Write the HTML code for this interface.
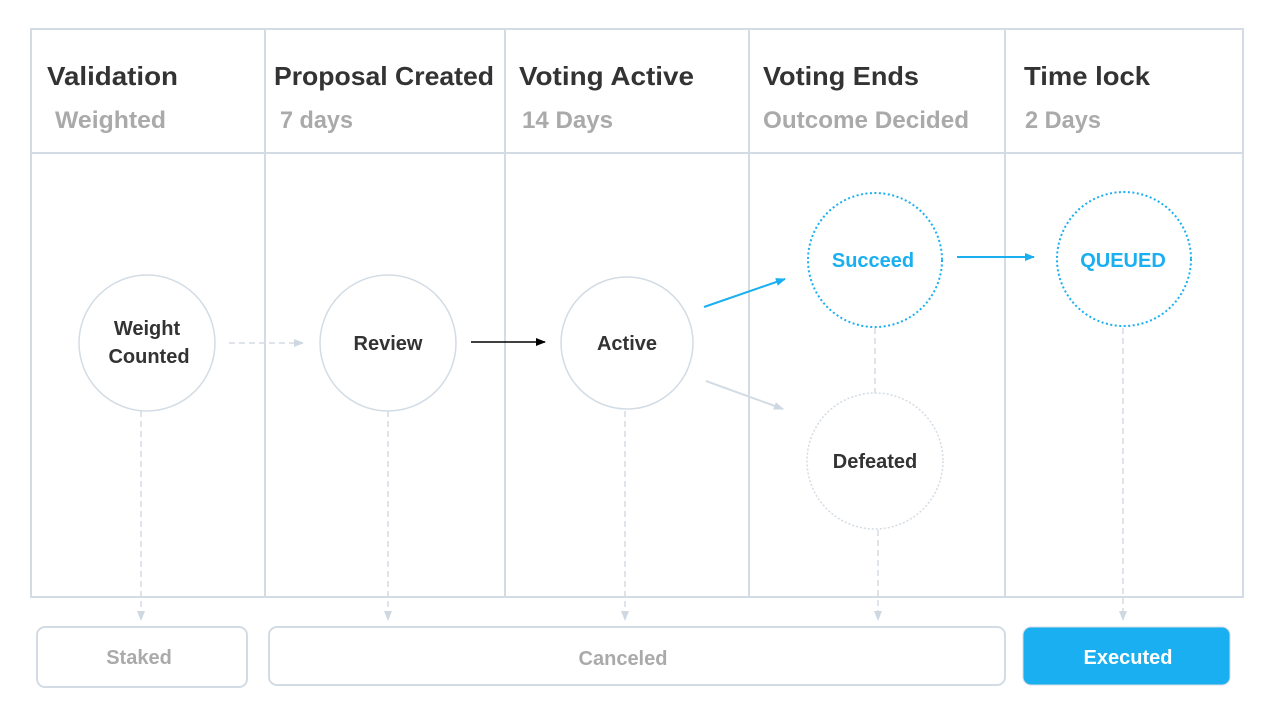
<!DOCTYPE html>
<html><head><meta charset="utf-8"><style>
html,body{margin:0;padding:0;background:#fff;width:1276px;height:714px;overflow:hidden}
svg text{font-family:"Liberation Sans",sans-serif;font-weight:bold}
</style></head><body>
<svg width="1276" height="714" viewBox="0 0 1276 714" xmlns="http://www.w3.org/2000/svg">
<defs>
<marker id="ag" markerWidth="10" markerHeight="8" refX="9" refY="4" orient="auto" markerUnits="userSpaceOnUse"><path d="M0,0 L10,4 L0,8 z" fill="#cfd8e1"/></marker>
<marker id="ak" markerWidth="10" markerHeight="8" refX="9" refY="4" orient="auto" markerUnits="userSpaceOnUse"><path d="M0,0 L10,4 L0,8 z" fill="#000"/></marker>
<marker id="ab" markerWidth="10" markerHeight="8" refX="9" refY="4" orient="auto" markerUnits="userSpaceOnUse"><path d="M0,0 L10,4 L0,8 z" fill="#1aaff0"/></marker>
</defs>
<g fill="none" stroke="#d3dce4" stroke-width="2">
<rect x="31" y="29" width="1212" height="568"/>
<line x1="31" y1="153" x2="1243" y2="153"/>
<line x1="265" y1="29" x2="265" y2="597"/>
<line x1="505" y1="29" x2="505" y2="597"/>
<line x1="749" y1="29" x2="749" y2="597"/>
<line x1="1005" y1="29" x2="1005" y2="597"/>
</g>
<g font-size="26" fill="#333">
<text x="47" y="85" textLength="131" lengthAdjust="spacingAndGlyphs">Validation</text>
<text x="274" y="85" textLength="220" lengthAdjust="spacingAndGlyphs">Proposal Created</text>
<text x="519" y="85" textLength="175" lengthAdjust="spacingAndGlyphs">Voting Active</text>
<text x="763" y="85" textLength="156" lengthAdjust="spacingAndGlyphs">Voting Ends</text>
<text x="1024" y="85" textLength="126" lengthAdjust="spacingAndGlyphs">Time lock</text>
</g>
<g font-size="24" fill="#aaa">
<text x="55" y="128" textLength="111" lengthAdjust="spacingAndGlyphs">Weighted</text>
<text x="280" y="128" textLength="73" lengthAdjust="spacingAndGlyphs">7 days</text>
<text x="522" y="128" textLength="91" lengthAdjust="spacingAndGlyphs">14 Days</text>
<text x="763" y="128" textLength="206" lengthAdjust="spacingAndGlyphs">Outcome Decided</text>
<text x="1025" y="128" textLength="76" lengthAdjust="spacingAndGlyphs">2 Days</text>
</g>
<g fill="none" stroke="#d3dce4" stroke-width="1.5" stroke-dasharray="6,4">
<line x1="141" y1="411" x2="141" y2="620" marker-end="url(#ag)"/>
<line x1="388" y1="411" x2="388" y2="620" marker-end="url(#ag)"/>
<line x1="625" y1="411" x2="625" y2="620" marker-end="url(#ag)"/>
<line x1="875" y1="328" x2="875" y2="396"/>
<line x1="878" y1="530" x2="878" y2="620" marker-end="url(#ag)"/>
<line x1="1123" y1="328" x2="1123" y2="620" marker-end="url(#ag)"/>
<line x1="229" y1="343" x2="303" y2="343" marker-end="url(#ag)"/>
</g>
<g fill="#fff" stroke="#d3dce4" stroke-width="1.5">
<circle cx="147" cy="343" r="68"/>
<circle cx="388" cy="343" r="68"/>
<circle cx="627" cy="343" r="66"/>
</g>
<circle cx="875" cy="461" r="68" fill="#fff" stroke="#d3dce4" stroke-width="1.5" stroke-dasharray="2,2"/>
<g fill="#fff" stroke="#1aaff0" stroke-width="2" stroke-dasharray="2,2.5">
<circle cx="875" cy="260" r="67"/>
<circle cx="1124" cy="259" r="67"/>
</g>
<line x1="471" y1="342" x2="545" y2="342" stroke="#000" stroke-width="1.6" marker-end="url(#ak)"/>
<line x1="704" y1="307" x2="785" y2="279" stroke="#1aaff0" stroke-width="2" marker-end="url(#ab)"/>
<line x1="957" y1="257" x2="1034" y2="257" stroke="#1aaff0" stroke-width="2" marker-end="url(#ab)"/>
<line x1="706" y1="381" x2="783" y2="409" stroke="#d3dce4" stroke-width="2" marker-end="url(#ag)"/>
<g font-size="20" fill="#333" text-anchor="middle">
<text x="147" y="335">Weight</text>
<text x="149" y="363">Counted</text>
<text x="388" y="350">Review</text>
<text x="627" y="350">Active</text>
<text x="875" y="468">Defeated</text>
</g>
<g font-size="20" fill="#1aaff0" text-anchor="middle">
<text x="873" y="267">Succeed</text>
<text x="1123" y="267">QUEUED</text>
</g>
<g fill="#fff" stroke="#d3dce4" stroke-width="2">
<rect x="37" y="627" width="210" height="60" rx="8"/>
<rect x="269" y="627" width="736" height="58" rx="8"/>
</g>
<rect x="1023" y="627" width="207" height="58" rx="8" fill="#1aaff0" stroke="#d3dce4" stroke-width="1"/>
<g font-size="20" text-anchor="middle">
<text x="139" y="664" fill="#aaa">Staked</text>
<text x="623" y="665" fill="#aaa">Canceled</text>
<text x="1128" y="664" fill="#fff">Executed</text>
</g>
</svg>
</body></html>
